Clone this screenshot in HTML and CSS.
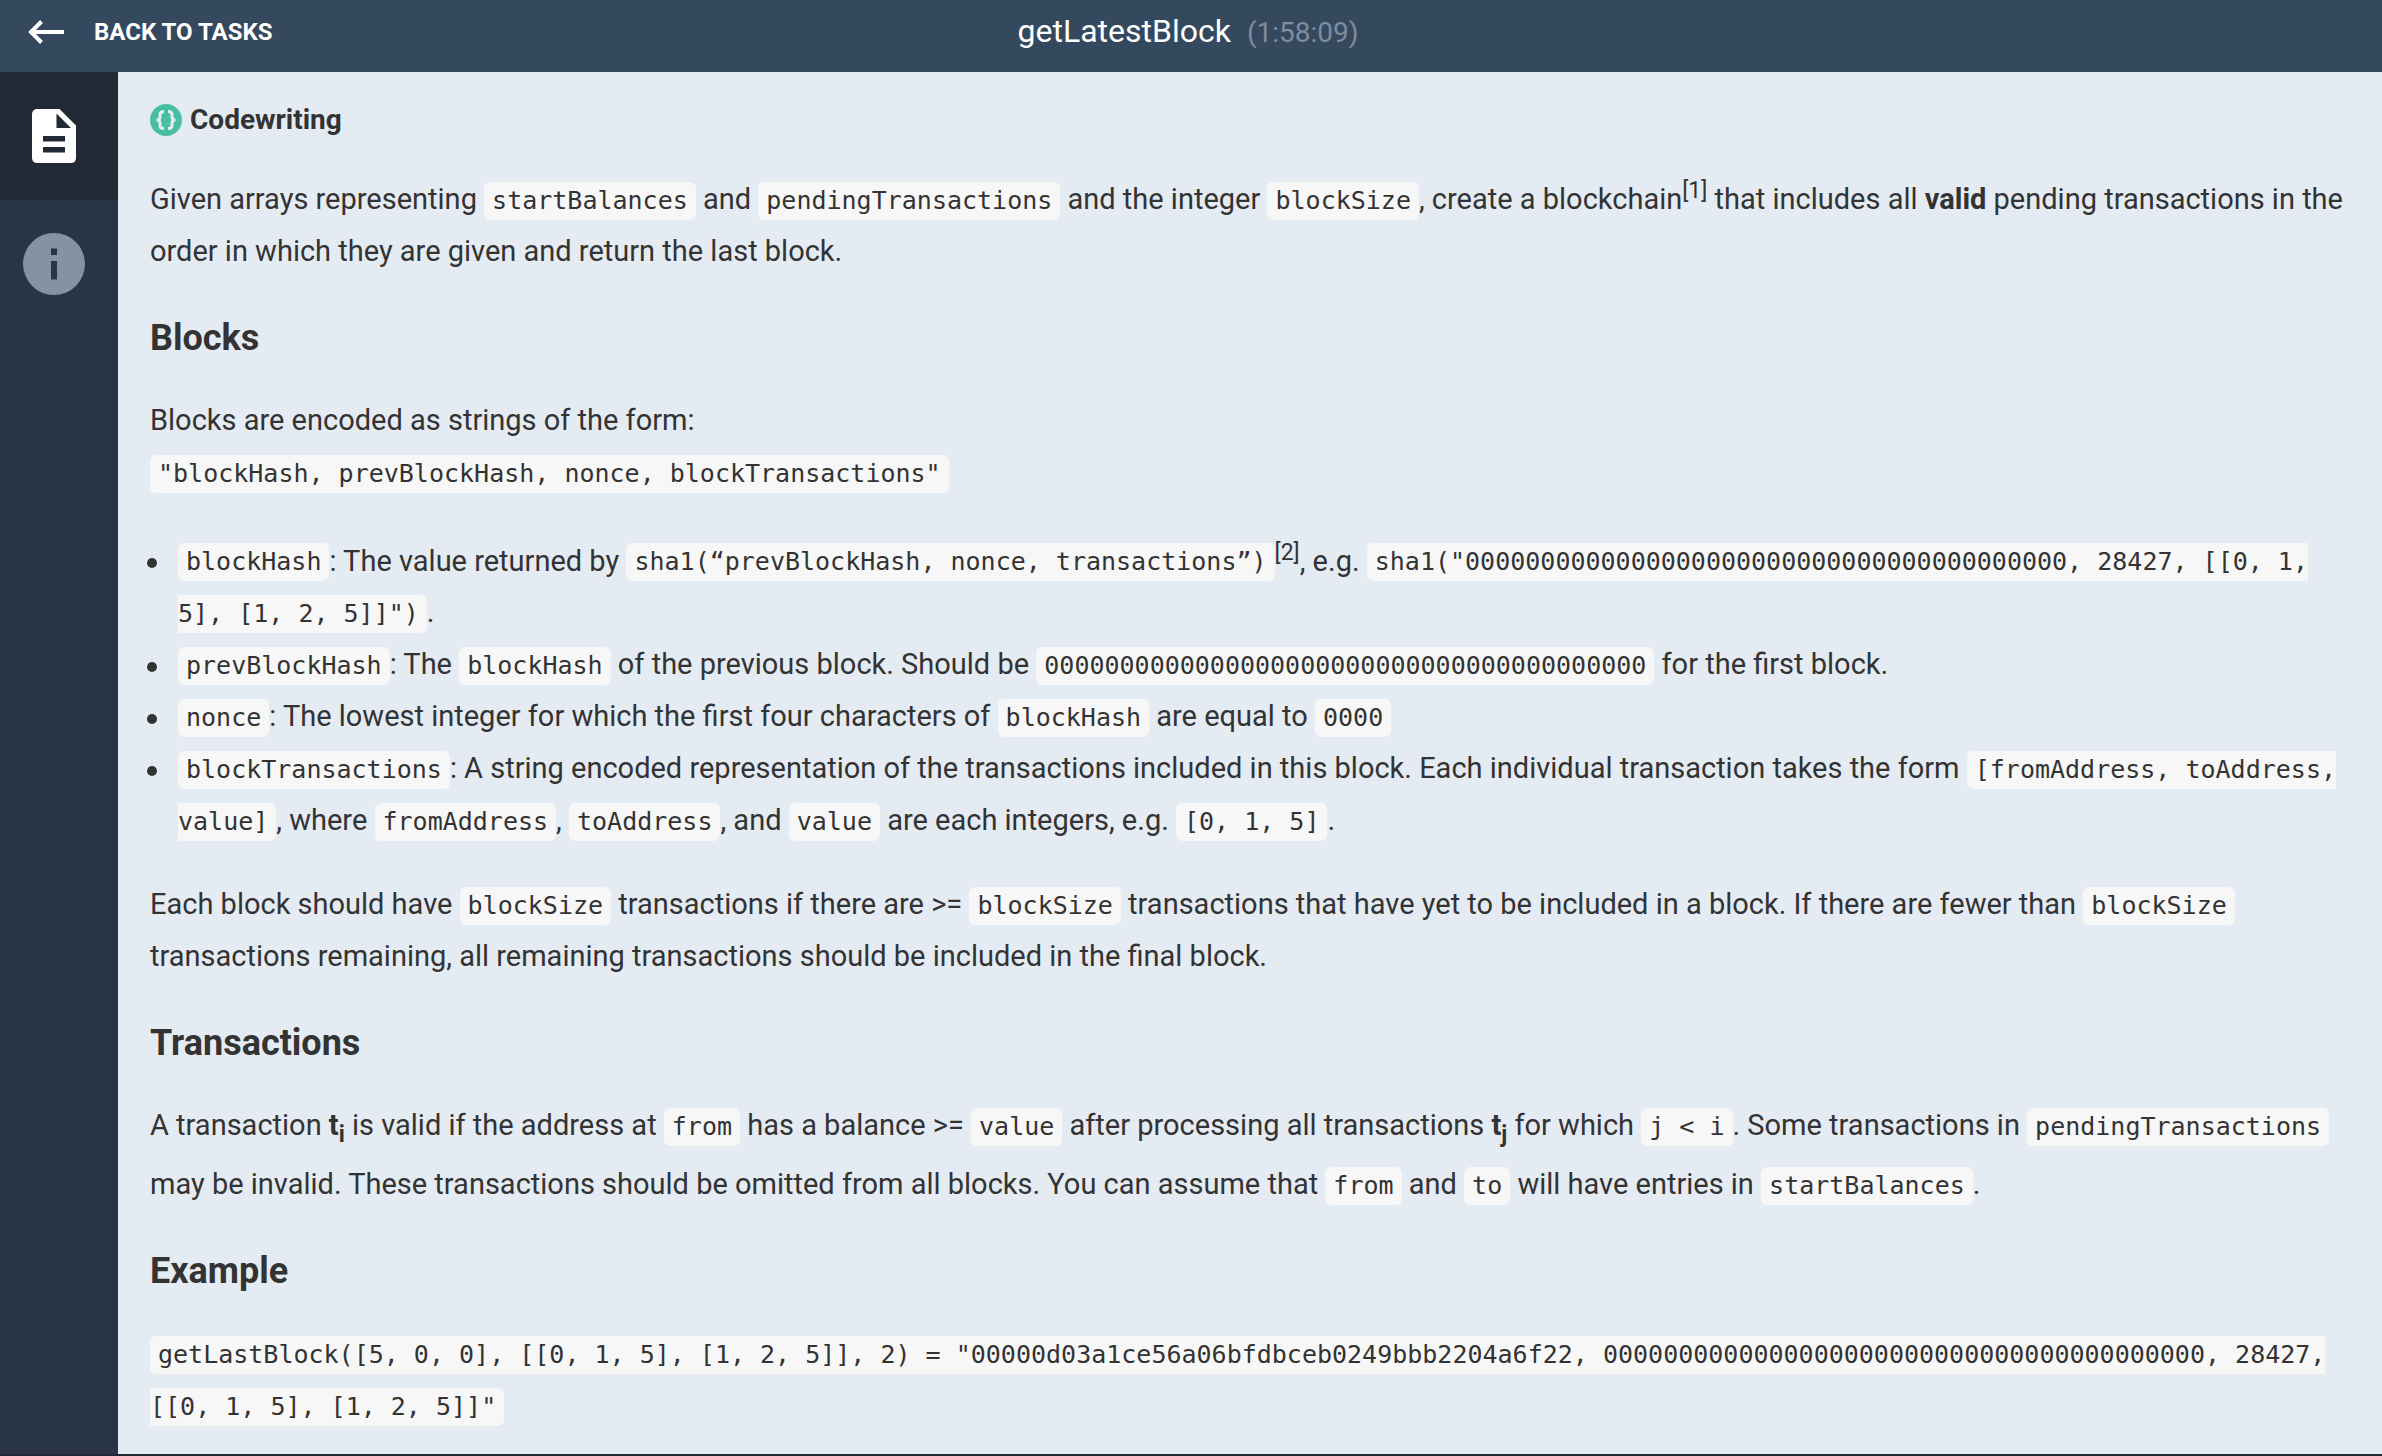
FILE: index.html
```html
<!DOCTYPE html>
<html lang="en">
<head>
<meta charset="utf-8">
<meta name="viewport" content="width=device-width, initial-scale=1">
<title>getLatestBlock</title>
<link rel="stylesheet" href="styles.css">
</head>
<body>
<div class="app">
  <header class="topbar">
    <a class="back" href="#tasks">
      <svg class="back-icon" viewBox="0 0 36 24" aria-hidden="true"><path d="M36 12H2M13.500 1.500L3 12l10.500 10.500" fill="none" stroke="currentColor" stroke-width="4"/></svg>
      <span>BACK TO TASKS</span>
    </a>
    <div class="heading">
      <h1 class="title">getLatestBlock</h1>
      <span class="timer">(1:58:09)</span>
    </div>
  </header>
  <div class="body">
    <nav class="sidebar" aria-label="Panels">
      <button class="tab tab-active" type="button" aria-label="Description">
        <svg class="icon-doc" viewBox="0 0 44 54" aria-hidden="true"><path fill="currentColor" fill-rule="evenodd" d="M5.500 0H27.500L44 16.500V48.500Q44 54 38.500 54H5.500Q0 54 0 48.500V5.500Q0 0 5.500 0ZM24.500 4.500V19H39ZM11 27V32.500H33V27ZM11 38V43.500H33V38Z"/></svg>
      </button>
      <button class="tab" type="button" aria-label="Information">
        <svg class="icon-info" viewBox="0 0 62 62" aria-hidden="true"><path fill="currentColor" fill-rule="evenodd" d="M31 0a31 31 0 1 0 0 62a31 31 0 1 0 0-62ZM28 15.500H34V22H28ZM28 28H34V46.500H28Z"/></svg>
      </button>
    </nav>
    <main class="content">
      <div class="kind">
        <svg class="icon-kind" viewBox="0 0 32 32" aria-hidden="true"><circle cx="16" cy="16" r="16" fill="#48bfa3"/><path d="M14 7.500c-3 0-4 1-4 3v2.500c0 1.800-.8 2.800-3.300 3c2.500 .2 3.300 1.200 3.300 3v2.500c0 2 1 3 4 3M18 7.500c3 0 4 1 4 3v2.500c0 1.800.8 2.800 3.300 3c-2.500 .2-3.300 1.200-3.300 3v2.500c0 2-1 3-4 3" fill="none" stroke="#e4ebf3" stroke-width="3"/></svg>
        <strong>Codewriting</strong>
      </div>
      <p>Given arrays representing <code>startBalances</code> and <code>pendingTransactions</code> and the integer <code>blockSize</code>, create a blockchain<sup>[1]</sup> that includes all <strong>valid</strong> pending transactions in the order in which they are given and return the last block.</p>
      <h2>Blocks</h2>
      <p>Blocks are encoded as strings of the form:<br><code>"blockHash, prevBlockHash, nonce, blockTransactions"</code></p>
      <ul>
        <li><code>blockHash</code>: The value returned by <code>sha1(“prevBlockHash, nonce, transactions”)</code><sup>[2]</sup>, e.g. <code>sha1("0000000000000000000000000000000000000000, 28427, [[0, 1, 5], [1, 2, 5]]")</code>.</li>
        <li><code>prevBlockHash</code>: The <code>blockHash</code> of the previous block. Should be <code>0000000000000000000000000000000000000000</code> for the first block.</li>
        <li><code>nonce</code>: The lowest integer for which the first four characters of <code>blockHash</code> are equal to <code>0000</code></li>
        <li><code>blockTransactions</code>: A string encoded representation of the transactions included in this block. Each individual transaction takes the form <code>[fromAddress, toAddress, value]</code>, where <code>fromAddress</code>, <code>toAddress</code>, and <code>value</code> are each integers, e.g. <code>[0, 1, 5]</code>.</li>
      </ul>
      <p>Each block should have <code>blockSize</code> transactions if there are &gt;= <code>blockSize</code> transactions that have yet to be included in a block. If there are fewer than <code>blockSize</code> transactions remaining, all remaining transactions should be included in the final block.</p>
      <h2>Transactions</h2>
      <p>A transaction <strong>t<sub>i</sub></strong> is valid if the address at <code>from</code> has a balance &gt;= <code>value</code> after processing all transactions <strong>t<sub>j</sub></strong> for which <code>j &lt; i</code>. Some transactions in <code>pendingTransactions</code> may be invalid. These transactions should be omitted from all blocks. You can assume that <code>from</code> and <code>to</code> will have entries in <code>startBalances</code>.</p>
      <h2>Example</h2>
      <p><code>getLastBlock([5, 0, 0], [[0, 1, 5], [1, 2, 5]], 2) = "00000d03a1ce56a06bfdbceb0249bbb2204a6f22, 0000000000000000000000000000000000000000, 28427, [[0, 1, 5], [1, 2, 5]]"</code></p>
    </main>
  </div>
</div>
</body>
</html>
```
FILE: styles.css
```css
* { box-sizing: border-box; }

body {
  margin: 0;
  background: #e4ebf3;
  color: #333;
  font-family: Roboto, "Liberation Sans", sans-serif;
  font-size: 28px;
  line-height: 52px;
}

.app {
  display: flex;
  flex-direction: column;
  min-height: 100vh;
  border-bottom: 2px solid #1f2737;
}

.topbar {
  display: grid;
  grid-template-columns: 1fr auto 1fr;
  align-items: center;
  height: 72px;
  padding: 0 34px 8px 28px;
  background: #34495e;
  color: #fff;
}

.back {
  display: flex;
  align-items: center;
  gap: 30px;
  color: #fff;
  font-size: 24px;
  font-weight: 700;
  text-decoration: none;
}

.back-icon { width: 36px; height: 24px; }

.heading { display: flex; align-items: baseline; gap: 16px; }

.title { margin: 0; font-size: 32px; font-weight: 400; }

.timer { color: #7f8c9f; }

.body { display: flex; flex: 1; }

.sidebar {
  display: flex;
  flex-direction: column;
  flex: none;
  width: 118px;
  background: #293546;
}

.tab {
  display: flex;
  align-items: center;
  justify-content: center;
  height: 128px;
  padding: 0 10px 0 0;
  border: 0;
  background: none;
  color: #8592a3;
}

.tab-active { background: #212a35; color: #fff; }

.icon-doc { width: 44px; height: 54px; }
.icon-info { width: 62px; height: 62px; }

.content { flex: 1; min-width: 0; padding: 22px 32px 0; }

.kind { display: flex; align-items: center; gap: 8px; }

.icon-kind { width: 32px; height: 32px; }

p, ul { margin: 0 0 32px; font-size: 29px; }

p:last-child { margin-bottom: 20px; }

ul { padding-left: 28px; list-style: none; }

li::before {
  content: "";
  display: inline-block;
  width: 10px;
  height: 10px;
  margin: 0 21px 0 -31px;
  border-radius: 50%;
  background: #333;
  vertical-align: middle;
}

h2 {
  margin: 35px 0 30px;
  font-size: 36px;
  font-weight: 700;
  line-height: 52px;
}

.kind + p { margin-top: 22px; }

code {
  padding: 4px 8px 5px;
  border-radius: 6px;
  background: #f7f7f7;
  font-family: "DejaVu Sans Mono", "Liberation Mono", monospace;
  font-size: 25px;
  line-height: 40px;
}

sup, sub { font-size: 23px; }
sup { line-height: 46px; }
sub { line-height: 46px; }
```
